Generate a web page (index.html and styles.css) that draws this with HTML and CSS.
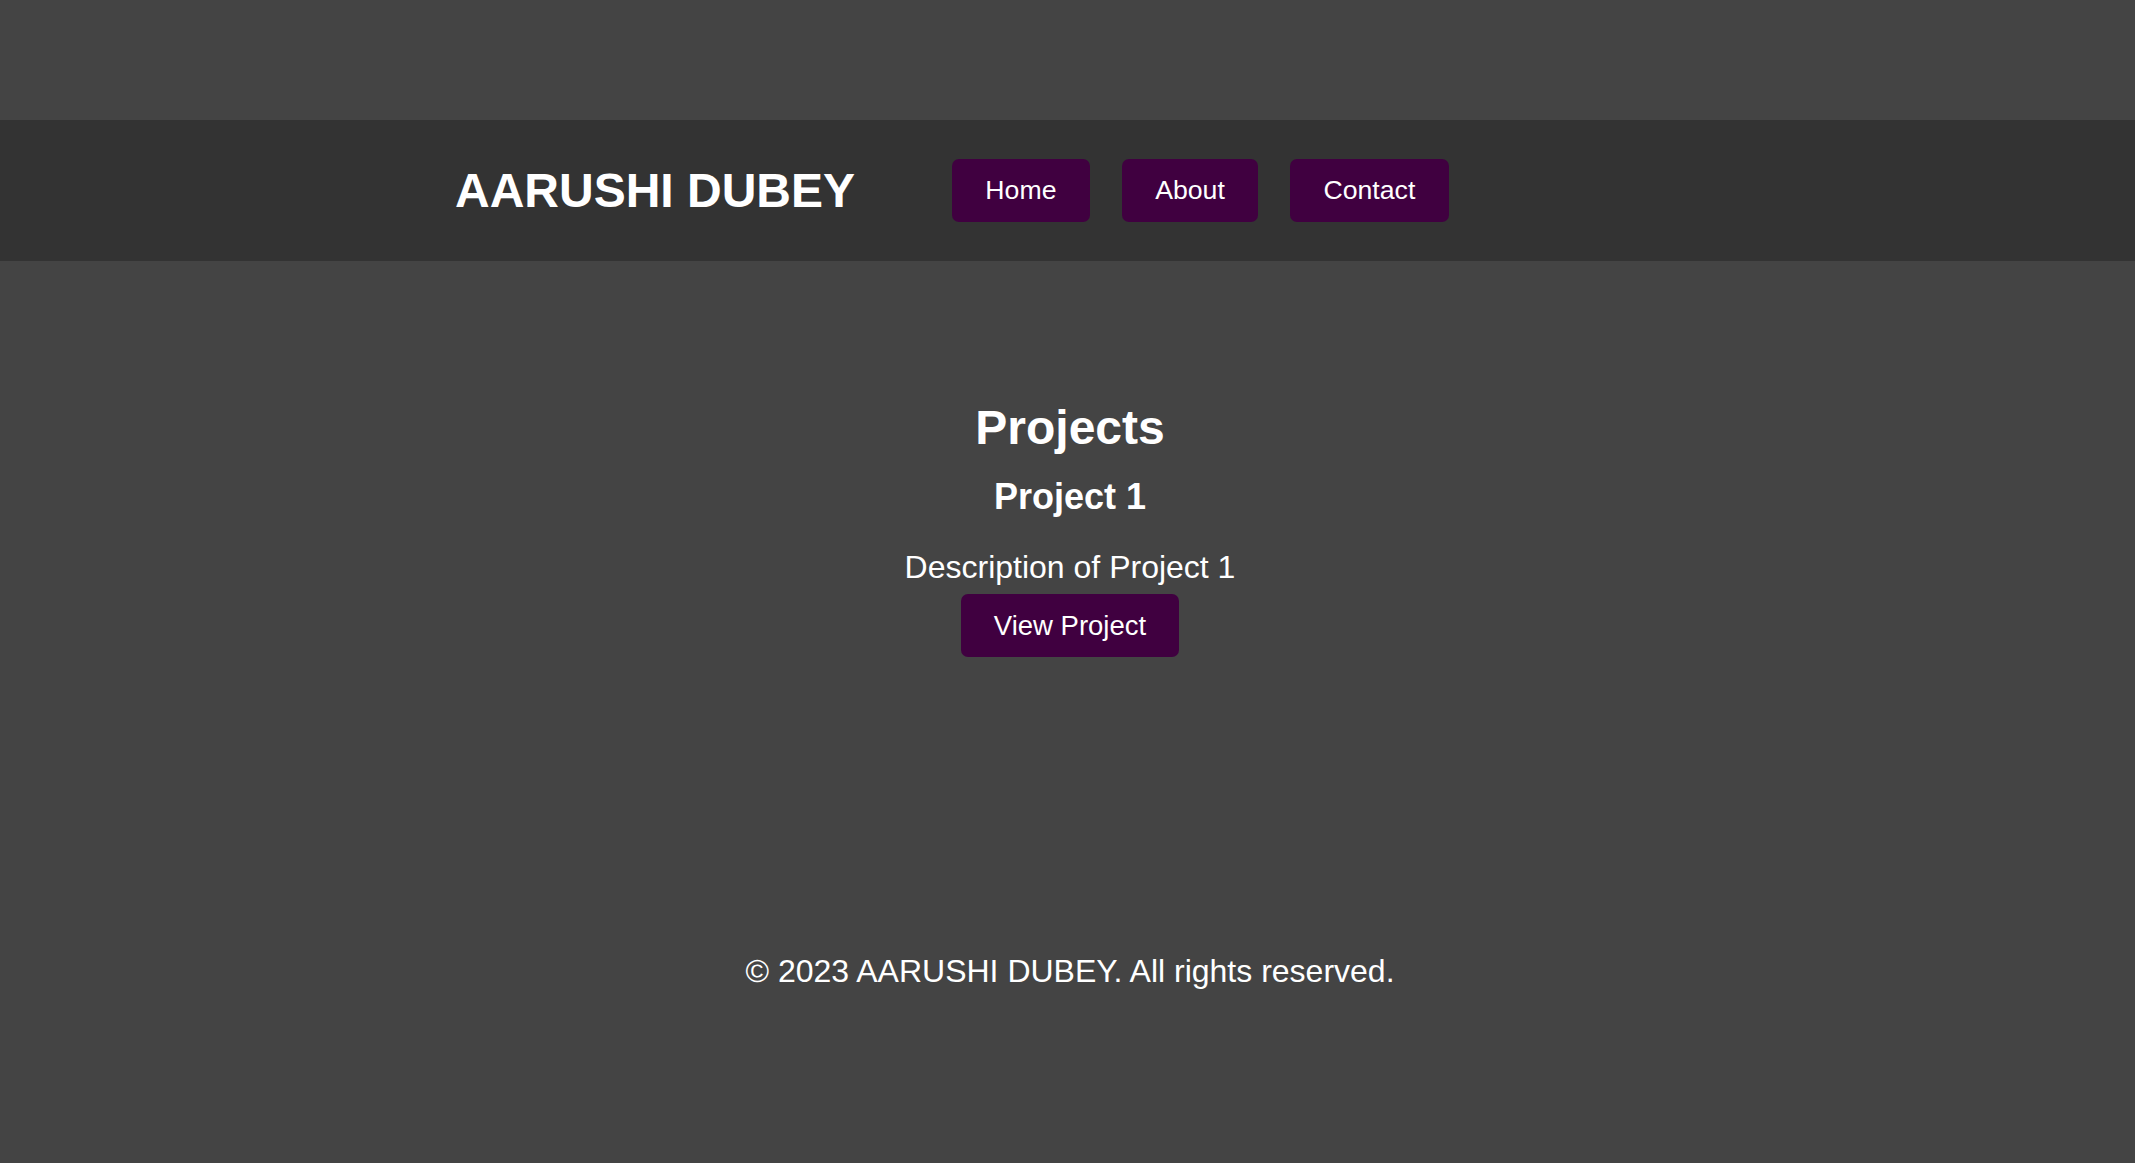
FILE: index.html
```html
<!DOCTYPE html>
<html lang="en">
<head>
<meta charset="utf-8">
<title>AARUSHI DUBEY - Projects</title>
<link rel="stylesheet" href="styles.css">
</head>
<body>
<header class="site-header">
  <div class="logo">AARUSHI DUBEY</div>
  <nav class="nav">
    <a class="nav-btn" href="#">Home</a>
    <a class="nav-btn" href="#">About</a>
    <a class="nav-btn" href="#">Contact</a>
  </nav>
</header>
<main class="projects">
  <h2 class="projects-title">Projects</h2>
  <section class="project">
    <h3 class="project-title">Project 1</h3>
    <p class="project-desc">Description of Project 1</p>
    <a class="project-btn" href="#">View Project</a>
  </section>
</main>
<footer class="site-footer">
  <p class="copyright">© 2023 AARUSHI DUBEY. All rights reserved.</p>
</footer>
</body>
</html>
```
FILE: styles.css
```css
html, body {
  margin: 0;
  padding: 0;
}
body {
  background: #444444;
  color: #ffffff;
  font-family: "Liberation Sans", Arial, sans-serif;
  padding-top: 120px;
  min-height: 1043px;
}
.site-header {
  background: #333333;
  height: 141px;
  display: flex;
  align-items: center;
  padding-left: 455px;
  box-sizing: border-box;
}
.logo {
  font-size: 48px;
  font-weight: bold;
  line-height: 56px;
  margin-right: 97px;
}
.nav {
  display: flex;
  gap: 32px;
}
.nav-btn {
  display: block;
  background: #400040;
  color: #ffffff;
  text-decoration: none;
  font-size: 26.67px;
  line-height: 30.67px;
  padding: 16.67px 33.33px;
  border-radius: 7px;
}
.projects {
  text-align: center;
  padding-top: 139px;
  padding-left: 5px;
}
.projects-title {
  margin: 0;
  font-size: 48px;
  line-height: 56px;
  font-weight: bold;
}
.project-title {
  margin: 20px 0 0;
  font-size: 36px;
  line-height: 42px;
  font-weight: bold;
}
.project-desc {
  margin: 31px 0 8px;
  font-size: 32px;
  line-height: 37px;
}
.project-btn {
  display: inline-block;
  background: #400040;
  color: #ffffff;
  text-decoration: none;
  font-size: 27.5px;
  line-height: 31px;
  padding: 16px 33px;
  border-radius: 7px;
}
.site-footer {
  text-align: center;
  padding-top: 296px;
  padding-left: 5px;
}
.copyright {
  margin: 0;
  font-size: 32px;
  line-height: 37px;
}
```
